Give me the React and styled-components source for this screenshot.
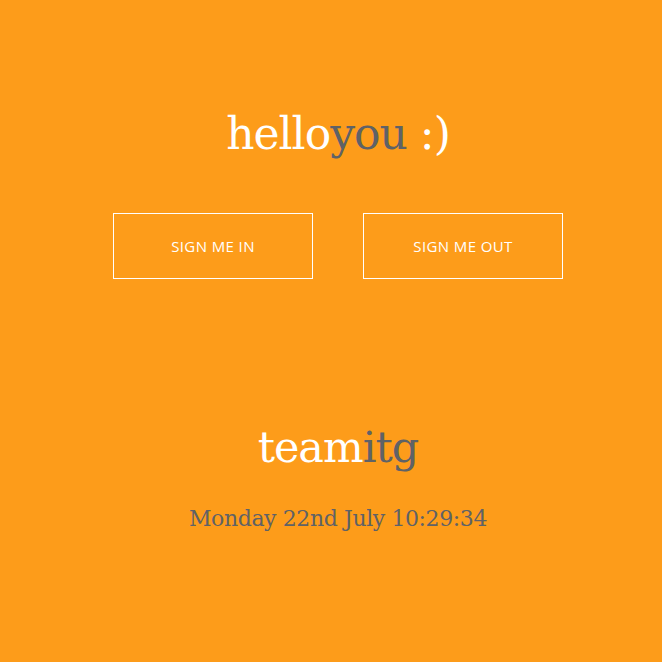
import React from "react";
import styled, { createGlobalStyle } from "styled-components";

const Global = createGlobalStyle`
  html, body { margin: 0; padding: 0; background: #fd9c1a; }
  body { font-family: "Liberation Serif", serif; }
`;

const Page = styled.main`
  width: 662px;
  height: 662px;
  background: #fd9c1a;
  display: flex;
  flex-direction: column;
  align-items: center;
  box-sizing: border-box;
  padding: 106px 0 0 14px;
`;

const Title = styled.h1`
  margin: 0;
  font-family: "DejaVu Serif", Georgia, serif;
  font-weight: normal;
  font-size: 44px;
  line-height: 56px;
  color: #ffffff;
  letter-spacing: -1px;
`;

const Grey = styled.span`
  color: #5f6266;
`;

const ButtonRow = styled.div`
  display: flex;
  gap: 50px;
  margin-top: 51px;
`;

const Button = styled.button`
  width: 200px;
  height: 66px;
  box-sizing: border-box;
  border: 1px solid #ffffff;
  background: transparent;
  color: #ffffff;
  font-family: "Open Sans", sans-serif;
  font-size: 15px;
  letter-spacing: 0.4px;
  text-transform: uppercase;
  cursor: pointer;
`;

const Team = styled.h2`
  margin: 140px 0 0;
  font-family: "DejaVu Serif", Georgia, serif;
  font-weight: normal;
  font-size: 43px;
  line-height: 56px;
  color: #ffffff;
  letter-spacing: -1px;
`;

const DateLine = styled.p`
  margin: 29px 0 0;
  font-family: "DejaVu Serif", Georgia, serif;
  font-size: 22px;
  line-height: 30px;
  color: #5f6266;
  letter-spacing: -0.4px;
`;

export default function App() {
  return (
    <>
      <Global />
      <Page>
        <Title>
          hello<Grey>you</Grey> :)
        </Title>
        <ButtonRow>
          <Button>Sign me in</Button>
          <Button>Sign me out</Button>
        </ButtonRow>
        <Team>
          team<Grey>itg</Grey>
        </Team>
        <DateLine>Monday 22nd July 10:29:34</DateLine>
      </Page>
    </>
  );
}
